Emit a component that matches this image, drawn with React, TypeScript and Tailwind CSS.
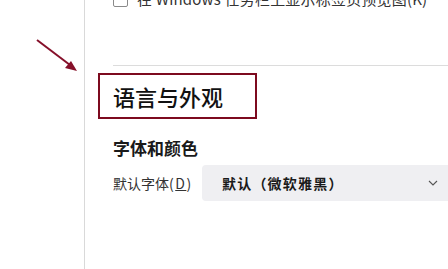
import React from "react";

export default function App() {
  const font = { fontFamily: '"Microsoft YaHei", "Noto Sans CJK SC", "Noto Sans", sans-serif' };
  return (
    <div className="relative w-[448px] h-[269px] overflow-hidden bg-white flex text-[#1a1a1a]" style={font}>
      <div className="w-[84px] shrink-0 relative">
        <svg className="absolute left-0 top-0" width="84" height="90" viewBox="0 0 84 90">
          <line x1="37" y1="40" x2="70" y2="65" stroke="#86102a" strokeWidth="2" />
          <polygon points="77,71 65,68 71,61" fill="#86102a" />
        </svg>
      </div>
      <div className="w-px shrink-0 bg-[#d9d9d9]" />
      <div className="flex-1 flex flex-col min-w-0">
        <div className="mt-[-11px] ml-[28px] flex items-center gap-[9px] h-5 text-[15px] leading-5 whitespace-nowrap text-[#333] tracking-[0.2px]">
          <div className="w-[15px] h-[15px] shrink-0 border border-[#8a8a8a] rounded-[2px] bg-white" />
          <span>在 Windows 任务栏上显示标签页预览图(K)</span>
        </div>
        <div className="mt-[56px] ml-[28px] h-px bg-[#dcdcdc]" />
        <div className="mt-[7px] ml-[13px] w-[159px] h-[46px] border-2 border-[#7d0a1f] flex items-center pl-[13px] text-[22px] leading-none text-[#111] font-medium">
          语言与外观
        </div>
        <div className="mt-[18px] ml-[28px] text-[17px] font-bold leading-[22px]">字体和颜色</div>
        <div className="mt-[6px] ml-[28px] flex items-center">
          <div className="w-[89px] shrink-0 text-[14px] text-[#333] whitespace-nowrap">
            默认字体<span className="tracking-[1.5px]">(<span className="underline">D</span>)</span>
          </div>
          <div className="flex-1 h-[36px] rounded-l-[4px] bg-[#efeff2] flex items-center pl-[20px] pr-[10px]">
            <span className="text-[14px] font-bold flex-1 whitespace-nowrap tracking-[1.2px]">默认（微软雅黑）</span>
            <svg width="10" height="6" viewBox="0 0 10 6">
              <polyline points="1,1 5,5 9,1" fill="none" stroke="#555" strokeWidth="1.1" />
            </svg>
          </div>
        </div>
      </div>
    </div>
  );
}
